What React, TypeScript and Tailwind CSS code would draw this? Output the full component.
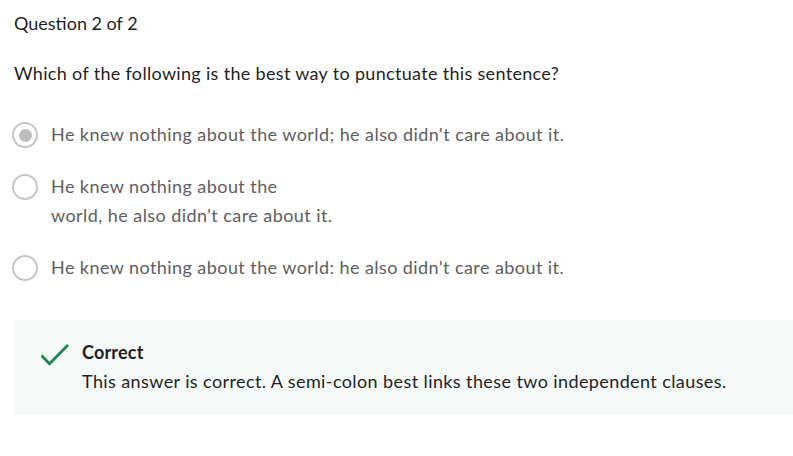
const options = [
  { id: "a", lines: ["He knew nothing about the world; he also didn't care about it."], selected: true },
  { id: "b", lines: ["He knew nothing about the", "world, he also didn't care about it."], selected: false },
  { id: "c", lines: ["He knew nothing about the world: he also didn't care about it."], selected: false },
];

function Radio({ selected }: { selected: boolean }) {
  return (
    <span className="mt-[2px] flex h-[26px] w-[26px] shrink-0 items-center justify-center rounded-full border-[2.5px] border-[#c6c6c6] bg-white">
      {selected && <span className="h-[13px] w-[13px] rounded-full bg-[#bdbdbd]" />}
    </span>
  );
}

export default function App() {
  return (
    <div className="min-h-screen bg-white pt-[9px] text-[18px] leading-[29px] text-[#1f1f1f] [font-family:Lato,'Liberation_Sans',sans-serif]">
      <div className="pl-[14px]">
        <p>Question 2 of 2</p>
        <p className="mt-[21px] tracking-[0.32px]">Which of the following is the best way to punctuate this sentence?</p>
      </div>

      <div className="mt-[32px] flex flex-col gap-[23px] pl-[12px]">
        {options.map((o) => (
          <label key={o.id} className="flex items-start gap-[13px] tracking-[0.43px] text-[#5e5e5e]">
            <Radio selected={o.selected} />
            <span>
              {o.lines.map((l, i) => (
                <span key={i} className="block">
                  {l}
                </span>
              ))}
            </span>
          </label>
        ))}
      </div>

      <div className="ml-[14px] mt-[38px] flex gap-[13px] bg-[#f5f9f8] pb-[18px] pl-[27px] pt-[18px]">
        <svg viewBox="0 0 28 24" className="mt-[6px] h-[24px] w-[28px] shrink-0" fill="none">
          <path d="M1.5 12.5 L8.5 19.8 L26 2" stroke="#1f8354" strokeWidth="2.8" strokeLinecap="square" strokeLinejoin="miter" />
        </svg>
        <div className="tracking-[0.4px]">
          <p className="font-bold tracking-[0.2px]">Correct</p>
          <p>This answer is correct. A semi-colon best links these two independent clauses.</p>
        </div>
      </div>
    </div>
  );
}
